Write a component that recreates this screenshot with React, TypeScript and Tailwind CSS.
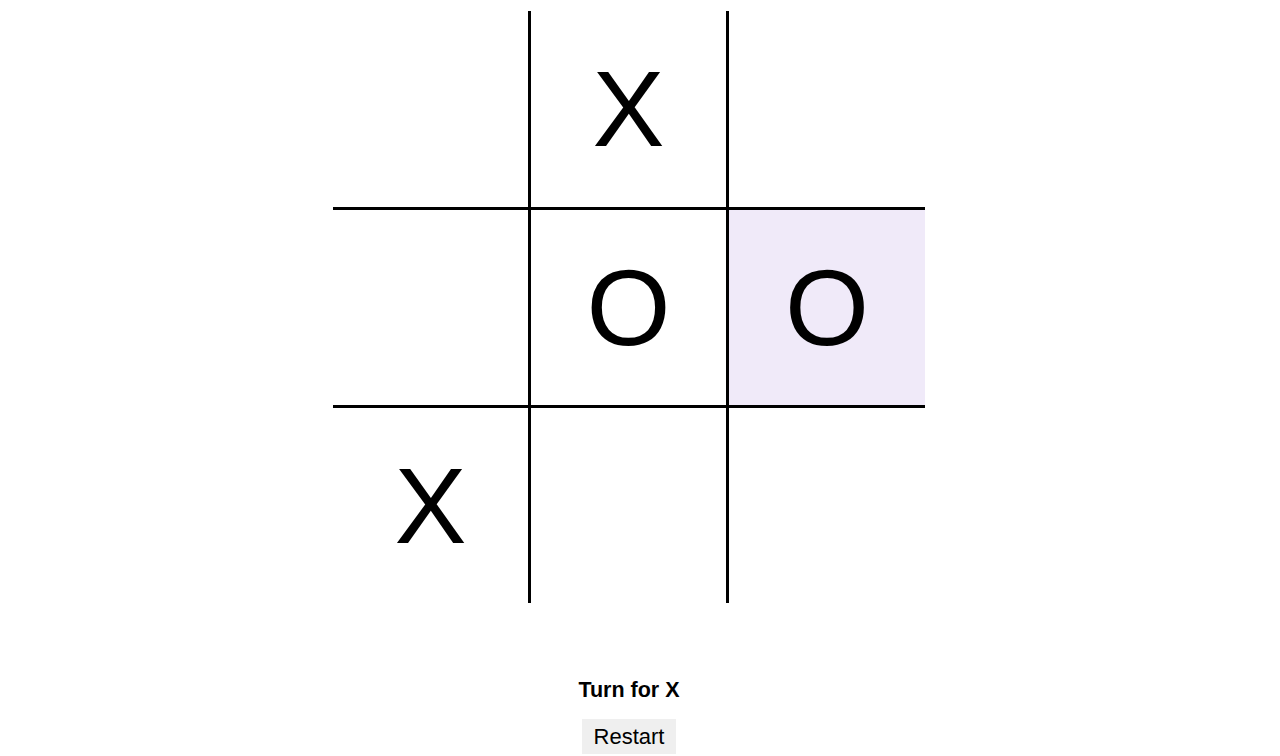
import React from "react";

type Mark = "X" | "O" | null;

const rowHeights = ["h-[199px]", "h-[198px]", "h-[195px]"];

export default function App() {
  const [board, setBoard] = React.useState<Mark[]>([null, "X", null, null, "O", "O", "X", null, null]);
  const [turn, setTurn] = React.useState<"X" | "O">("X");
  const highlighted = 5;

  function play(i: number) {
    if (board[i]) return;
    const next = [...board];
    next[i] = turn;
    setBoard(next);
    setTurn(turn === "X" ? "O" : "X");
  }

  function restart() {
    setBoard([null, null, null, null, null, null, null, null, null]);
    setTurn("X");
  }

  return (
    <div className="min-h-screen bg-white font-['Liberation_Sans',Arial,sans-serif] text-black">
      <div className="w-[1258px] flex flex-col items-center pt-[11px]">
        <div className="grid grid-cols-[198px_198px_196px] w-[592px]">
          {board.map((cell, i) => {
            const col = i % 3;
            const row = Math.floor(i / 3);
            return (
              <button
                key={i}
                onClick={() => play(i)}
                className={`${rowHeights[row]} flex items-center justify-center border-black text-[108px] ${
                  col < 2 ? "border-r-[3px]" : ""
                } ${row < 2 ? "border-b-[3px]" : ""} ${i === highlighted ? "bg-[#f0eaf9]" : "bg-white"}`}
              >
                {cell}
              </button>
            );
          })}
        </div>
        <div className="mt-[71px] text-[21.5px] font-bold">Turn for {turn}</div>
        <button
          onClick={restart}
          className="mt-[13px] h-[35px] px-[12px] bg-[#efefef] text-[22px] flex items-center"
        >
          Restart
        </button>
      </div>
    </div>
  );
}
